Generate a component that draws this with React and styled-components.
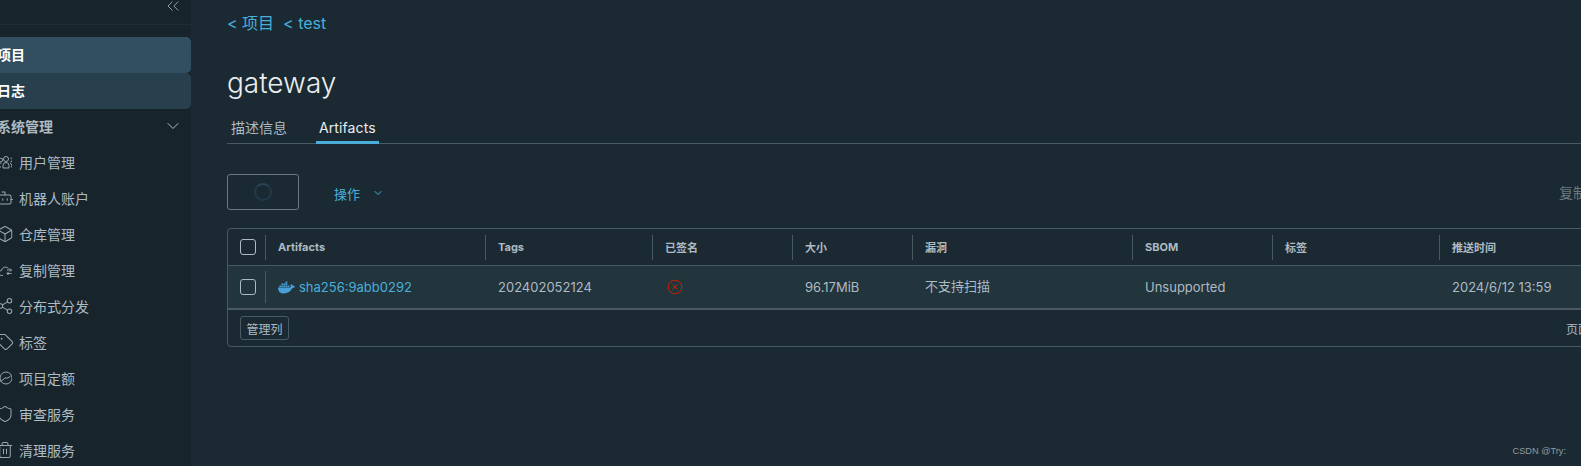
import styled, { createGlobalStyle } from "styled-components";
import { Bot, Box, ChevronDown, ChevronsLeft, Share2, Tag, Shield, Trash2 } from "lucide-react";
import { FaDocker } from "react-icons/fa";

const fontStack = `Inter, "Noto Sans CJK SC", "Noto Sans", sans-serif`;
const columns = "38px 220px 167px 140px 120px 220px 140px 167px 1fr";

const GlobalStyle = createGlobalStyle`
  html, body {
    margin: 0;
    height: 100%;
    background: #1b2a32;
    font-family: ${fontStack};
  }
  * { box-sizing: border-box; }
`;

const UserGroup = () => (
  <svg width="16" height="16" viewBox="0 0 16 16" fill="none" stroke="currentColor">
    <circle cx="10" cy="5" r="2.500" />
    <path d="M7 14v-2.500a3 3 0 0 1 6 0V14z" />
    <circle cx="4.800" cy="6" r="1.800" />
    <path d="M5 13H2.500v-1.500A2.800 2.800 0 0 1 5.500 9" />
    <path d="M14.500 4a1.800 1.800 0 0 1 0 3.800M15 13h.8v-1.500A2.800 2.800 0 0 0 14 9" />
  </svg>
);

const CloudSync = () => (
  <svg width="16" height="16" viewBox="0 0 16 16" fill="none" stroke="currentColor">
    <path d="M7 13.500H5.500a2.500 2.500 0 0 1 0-5 4 4 0 0 1 7-2" />
    <path d="M11 8h4.500M14 6.500 15.500 8 14 9.500M15.500 11.500H11M12.500 10 11 11.500l1.500 1.500" />
  </svg>
);

const Quota = () => (
  <svg width="16" height="16" viewBox="0 0 16 16" fill="none" stroke="currentColor">
    <circle cx="10" cy="8" r="6" />
    <path d="M4.500 11.500 9 8h3l2.500-2" />
  </svg>
);

const lucideIcon = (Icon) => <Icon size={18} strokeWidth={1.35} />;

const children = [
  { label: "用户管理", icon: <UserGroup /> },
  { label: "机器人账户", icon: lucideIcon(Bot) },
  { label: "仓库管理", icon: lucideIcon(Box) },
  { label: "复制管理", icon: <CloudSync /> },
  { label: "分布式分发", icon: lucideIcon(Share2) },
  { label: "标签", icon: lucideIcon(Tag) },
  { label: "项目定额", icon: <Quota /> },
  { label: "审查服务", icon: lucideIcon(Shield) },
  { label: "清理服务", icon: lucideIcon(Trash2) },
];

const headers = ["Artifacts", "Tags", "已签名", "大小", "漏洞", "SBOM", "标签", "推送时间"];

const App = () => {
  return (
    <>
      <GlobalStyle />
      <Page>
        <Sidebar>
          <Collapse>
            <ChevronsLeft size={20} strokeWidth={1.1} />
          </Collapse>
          <Nav>
            <MainItem $bg="#324f61">项目</MainItem>
            <MainItem $bg="#28404d">日志</MainItem>
            <GroupItem>
              系统管理
              <ChevronDown size={20} strokeWidth={1.2} />
            </GroupItem>
            {children.map((item) => (
              <ChildItem key={item.label}>
                <IconSlot>{item.icon}</IconSlot>
                {item.label}
              </ChildItem>
            ))}
          </Nav>
        </Sidebar>
        <Main>
          <Breadcrumb>
            <span>&lt; 项目</span>
            <span>&lt; test</span>
          </Breadcrumb>
          <Title>gateway</Title>
          <Tabs>
            <Tab>描述信息</Tab>
            <Tab $active>Artifacts</Tab>
          </Tabs>
          <Toolbar>
            <LoadingButton>
              <Spinner />
            </LoadingButton>
            <ActionLink>
              操作
              <ChevronDown size={12} strokeWidth={2} />
            </ActionLink>
            <CopyHint>复制</CopyHint>
          </Toolbar>
          <Table>
            <HeadRow>
              <HeadCell>
                <Checkbox />
              </HeadCell>
              {headers.map((h) => (
                <HeadCell key={h}>{h}</HeadCell>
              ))}
            </HeadRow>
            <BodyRow>
              <BodyCell $sep>
                <Checkbox />
              </BodyCell>
              <BodyCell>
                <ArtifactLink>
                  <FaDocker size={17} color="#4a9fd8" />
                  sha256:9abb0292
                </ArtifactLink>
              </BodyCell>
              <BodyCell>202402052124</BodyCell>
              <BodyCell>
                <ErrorMark viewBox="0 0 16 16">
                  <circle cx="8" cy="8" r="6.800" />
                  <path d="M5.500 5.500l5 5M10.500 5.500l-5 5" />
                </ErrorMark>
              </BodyCell>
              <BodyCell>96.17MiB</BodyCell>
              <BodyCell $raised>不支持扫描</BodyCell>
              <BodyCell>Unsupported</BodyCell>
              <BodyCell />
              <BodyCell>2024/6/12 13:59</BodyCell>
            </BodyRow>
            <Footer>
              <ManageButton>管理列</ManageButton>
              <PageLabel>页面</PageLabel>
            </Footer>
          </Table>
        </Main>
        <Watermark>CSDN @Try:</Watermark>
      </Page>
    </>
  );
};

const Page = styled.div`
  position: relative;
  display: flex;
  width: 1581px;
  height: 466px;
  overflow: hidden;
  background: #1b2a32;
`;

const Sidebar = styled.aside`
  flex: 0 0 191px;
  background: #17242b;
  overflow: hidden;
`;

const Collapse = styled.div`
  display: flex;
  justify-content: flex-end;
  align-items: center;
  height: 25px;
  padding: 0 8px 12px 0;
  color: #9aa9b2;
  border-bottom: 1px solid #1f2e36;
  svg {
    flex: none;
  }
`;

const Nav = styled.nav`
  padding-top: 12px;
`;

const MainItem = styled.div`
  display: flex;
  align-items: center;
  height: 36px;
  padding-bottom: 2px;
  margin-left: -3px;
  background: ${(p) => p.$bg};
  border-radius: 0 5px 5px 0;
  color: #ffffff;
  font-size: 14px;
  font-weight: 700;
`;

const GroupItem = styled.div`
  display: flex;
  align-items: center;
  justify-content: space-between;
  height: 36px;
  padding-bottom: 2px;
  margin-left: -3px;
  padding-right: 8px;
  color: #adbbc4;
  font-size: 14px;
  font-weight: 700;
`;

const ChildItem = styled.div`
  display: flex;
  align-items: center;
  height: 36px;
  padding-bottom: 2px;
  margin-left: -4px;
  color: #adbbc4;
  font-size: 14px;
`;

const IconSlot = styled.span`
  display: flex;
  flex: none;
  width: 23px;
  color: #99a8b1;
  svg {
    flex: none;
  }
`;

const Main = styled.main`
  flex: 1;
  min-width: 0;
  padding-left: 36px;
  overflow: hidden;
`;

const Breadcrumb = styled.div`
  display: flex;
  gap: 9px;
  height: 47px;
  padding-top: 13px;
  color: #49afd9;
  font-size: 16px;
  line-height: 20px;
`;

const Title = styled.h1`
  margin: 0;
  height: 69px;
  padding-top: 17px;
  color: #eaedf0;
  font-size: 28px;
  font-weight: 300;
  line-height: 38px;
`;

const Tabs = styled.div`
  display: flex;
  gap: 28px;
  height: 28px;
  padding-left: 3px;
  border-bottom: 1px solid #4a5a63;
`;

const Tab = styled.div`
  padding: 0 ${(p) => (p.$active ? "3px" : "1px")};
  margin-top: 1px;
  color: ${(p) => (p.$active ? "#eaedf0" : "#adbbc4")};
  font-size: 14px;
  letter-spacing: ${(p) => (p.$active ? "0.1px" : "0")};
  line-height: 22px;
  height: 27px;
  border-bottom: 3px solid ${(p) => (p.$active ? "#49afd9" : "transparent")};
`;

const Toolbar = styled.div`
  display: flex;
  align-items: center;
  height: 36px;
  margin-top: 30px;
`;

const LoadingButton = styled.div`
  display: flex;
  flex: none;
  align-items: center;
  justify-content: center;
  width: 72px;
  height: 36px;
  border: 1px solid #6a7780;
  border-radius: 3px;
`;

const Spinner = styled.div`
  width: 18px;
  height: 18px;
  border: 2px solid #22394a;
  border-top-color: #2b4556;
  border-radius: 50%;
`;

const ActionLink = styled.div`
  display: flex;
  flex: none;
  align-items: center;
  gap: 12px;
  margin-left: 35px;
  margin-top: 2px;
  color: #49afd9;
  font-size: 13px;
  white-space: nowrap;
`;

const CopyHint = styled.div`
  flex: none;
  margin-left: 1175px;
  color: #6b7980;
  font-size: 14px;
  white-space: nowrap;
`;

const Table = styled.div`
  width: 1420px;
  margin-top: 18px;
  border: 1px solid #4a5a63;
  border-radius: 4px;
`;

const HeadRow = styled.div`
  display: grid;
  grid-template-columns: ${columns};
  align-items: center;
  height: 37px;
  border-bottom: 1px solid #4a5a63;
`;

const HeadCell = styled.div`
  display: flex;
  align-items: center;
  height: 25px;
  padding-left: 12px;
  border-right: 1px solid #4a5a63;
  color: #adbbc4;
  font-size: 11px;
  font-weight: 700;
  &:last-child {
    border-right: 0;
  }
`;

const BodyRow = styled.div`
  display: grid;
  grid-template-columns: ${columns};
  align-items: center;
  height: 44px;
  background: #22343c;
  border-bottom: 2px solid #4a5a63;
`;

const BodyCell = styled.div`
  display: flex;
  align-items: center;
  height: ${(p) => (p.$sep ? "32px" : "auto")};
  margin-bottom: ${(p) => (p.$raised ? "3px" : "0")};
  padding-left: 12px;
  border-right: ${(p) => (p.$sep ? "1px solid #4a5a63" : "0")};
  color: #adbbc4;
  font-size: 13px;
  white-space: nowrap;
`;

const Checkbox = styled.span`
  display: block;
  flex: none;
  width: 16px;
  height: 16px;
  border: 1px solid #acbac3;
  border-radius: 3px;
`;

const ArtifactLink = styled.span`
  display: flex;
  align-items: center;
  gap: 4px;
  color: #49afd9;
`;

const ErrorMark = styled.svg`
  width: 16px;
  height: 16px;
  margin-left: 2px;
  fill: none;
  stroke: #c92100;
`;

const Footer = styled.div`
  display: flex;
  align-items: center;
  justify-content: space-between;
  height: 36px;
  padding: 0 0 0 12px;
`;

const ManageButton = styled.div`
  display: flex;
  align-items: center;
  justify-content: center;
  width: 49px;
  height: 24px;
  border: 1px solid #4a5a63;
  border-radius: 3px;
  color: #adbbc4;
  font-size: 12px;
`;

const PageLabel = styled.div`
  margin-right: 56px;
  color: #adbbc4;
  font-size: 12px;
`;

const Watermark = styled.div`
  position: absolute;
  right: 15px;
  top: 445px;
  color: #8f9a9f;
  font-family: "Liberation Sans", sans-serif;
  font-size: 9.2px;
  line-height: 12px;
`;

export default App;
